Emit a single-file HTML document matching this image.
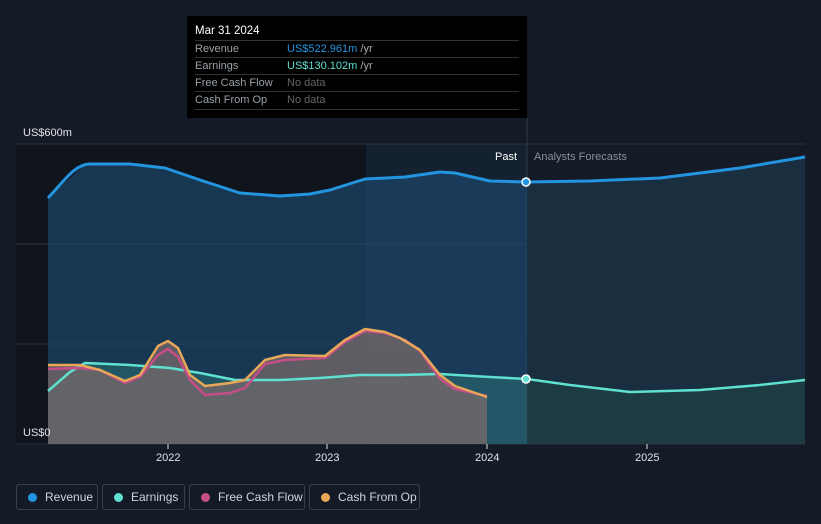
<!DOCTYPE html>
<html><head><style>
body{margin:0;width:821px;height:524px;background:#151b26;font-family:"Liberation Sans",sans-serif;overflow:hidden;position:relative}
.tt{position:absolute;left:187px;top:16px;width:340px;height:102px;background:#000;font-size:11px}
.tt .h{position:absolute;left:8px;top:9px;color:#fff;font-size:11.5px}
.row{position:absolute;left:8px;width:324px;height:17px;border-top:1px solid #333;color:#9aa0a8}
.row span{position:absolute;top:2px}
.row .v{left:92px}
.leg{position:absolute;top:484px;height:26px;border:1px solid #3a404a;border-radius:3px;color:#d0d4da;font-size:12px;box-sizing:border-box;line-height:24px}
.leg i{position:absolute;left:11px;top:8px;width:9px;height:9px;border-radius:50%}
.leg span{position:absolute;left:28px}
</style></head><body>
<svg width="821" height="524" style="position:absolute;left:0;top:0">
<rect x="16" y="144" width="350" height="300" fill="#10141c"/>
<rect x="366" y="144" width="161" height="300" fill="#142130"/>
<g stroke="#2c3340" stroke-width="1">
<line x1="16" y1="144" x2="805" y2="144"/><line x1="16" y1="244" x2="805" y2="244"/><line x1="16" y1="344" x2="805" y2="344"/><line x1="16" y1="444" x2="805" y2="444"/>
</g>
<line x1="527" y1="118" x2="527" y2="444" stroke="#2c3a4c"/>
<path d="M48,198 L85,164 130,164 165,168 200,180 240,193 280,196 310,194 330,190 365,179 405,177 440,172 455,173 490,181 527,182 L527,444 48,444Z" fill="#1b4a70" opacity="0.65"/>
<path d="M527,182 590,181 660,178 740,168 805,157 L805,444 527,444Z" fill="#1a3346" opacity="0.8"/>
<path d="M48,391 70,372 85,363 130,365 170,368 200,373 235,380 280,380 320,378 360,375 400,375 440,374 490,377 527,379 L527,444 48,444Z" fill="#2a6a72" opacity="0.6"/>
<path d="M527,379 570,385 630,392 700,390 760,385 805,380 L805,444 527,444Z" fill="#1f4146" opacity="0.7"/>
<path d="M48,365 80,365 100,370 125,381 140,375 158,346 168,341 178,348 190,375 205,386 230,383 245,380 265,360 285,355 325,356 345,340 365,329 385,332 400,338 420,350 440,375 455,386 487,397 L487,444 48,444Z" fill="#7a6a6a" opacity="0.75"/>
<path d="M48,198 C65,180 75,164 90,164 L130,164 165,168 200,180 240,193 280,196 310,194 330,190 365,179 405,177 440,172 455,173 490,181 527,182 590,181 660,178 740,168 805,157" fill="none" stroke="#2394df" stroke-width="3" stroke-linejoin="round"/>
<path d="M48,391 70,372 85,363 130,365 170,368 200,373 235,380 280,380 320,378 360,375 400,375 440,374 490,377 527,379 570,385 630,392 700,390 760,385 805,380" fill="none" stroke="#5fe0d0" stroke-width="2.5" stroke-linejoin="round"/>
<path d="M48,369 80,368 100,370 125,383 140,377 158,355 168,349 178,357 190,380 205,395 230,393 245,388 265,364 285,360 325,358 345,342 365,331 385,333 405,340 420,351 440,379 455,389 487,396" fill="none" stroke="#c44e86" stroke-width="2.5" stroke-linejoin="round"/>
<path d="M48,365 80,365 100,370 125,381 140,375 158,346 168,341 178,348 190,375 205,386 230,383 245,380 265,360 285,355 325,356 345,340 365,329 385,332 400,338 420,350 440,375 455,386 487,397" fill="none" stroke="#e8a857" stroke-width="2.5" stroke-linejoin="round"/>
<circle cx="526" cy="182" r="4" fill="#2394df" stroke="#fff" stroke-width="1.5"/>
<circle cx="526" cy="379" r="4" fill="#5fe0d0" stroke="#fff" stroke-width="1.5"/>
<g fill="#e0e3e8" font-size="11" font-family="Liberation Sans">
<text x="23" y="136">US$600m</text><text x="23" y="436">US$0</text>
<text x="156" y="461">2022</text><text x="315" y="461">2023</text><text x="475" y="461">2024</text><text x="635" y="461">2025</text>
<text x="495" y="160" fill="#fff">Past</text><text x="534" y="160" fill="#8a9099">Analysts Forecasts</text>
</g>
<g stroke="#e0e3e8"><line x1="168" y1="444" x2="168" y2="449"/><line x1="327" y1="444" x2="327" y2="449"/><line x1="487" y1="444" x2="487" y2="449"/><line x1="647" y1="444" x2="647" y2="449"/></g>
</svg>
<div class="tt"><div class="h">Mar 31 2024</div>
<div class="row" style="top:24px"><span>Revenue</span><span class="v" style="color:#2394df">US$522.961m <span style="position:static;color:#aaa">/yr</span></span></div>
<div class="row" style="top:41px"><span>Earnings</span><span class="v" style="color:#5fe0d0">US$130.102m <span style="position:static;color:#aaa">/yr</span></span></div>
<div class="row" style="top:58px"><span>Free Cash Flow</span><span class="v" style="color:#666">No data</span></div>
<div class="row" style="top:75px"><span>Cash From Op</span><span class="v" style="color:#666">No data</span></div>
<div class="row" style="top:93px;height:0"></div>
</div>
<div class="leg" style="left:16px;width:82px"><i style="background:#2394df"></i><span>Revenue</span></div>
<div class="leg" style="left:102px;width:83px"><i style="background:#5fe0d0"></i><span>Earnings</span></div>
<div class="leg" style="left:189px;width:116px"><i style="background:#c44e86"></i><span>Free Cash Flow</span></div>
<div class="leg" style="left:309px;width:111px"><i style="background:#e8a857"></i><span>Cash From Op</span></div>
</body></html>
